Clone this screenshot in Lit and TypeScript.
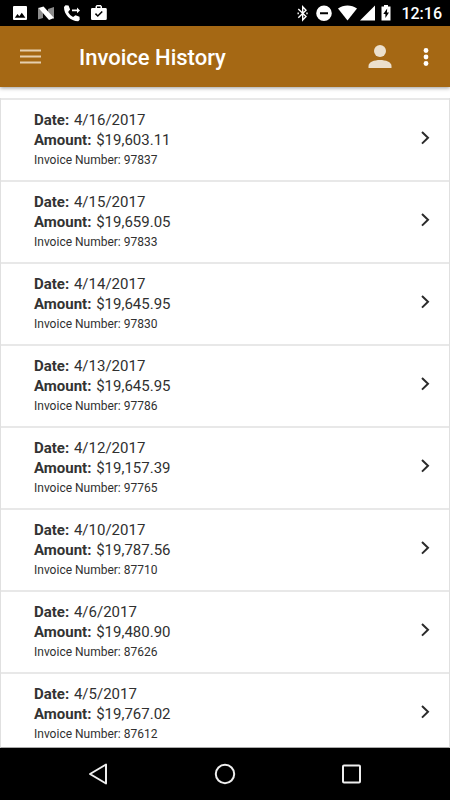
import { LitElement, html, css, svg } from "lit";
import { customElement, property } from "lit/decorators.js";

interface Invoice {
  date: string;
  amount: string;
  number: string;
}

const invoices: Invoice[] = [
  { date: "4/16/2017", amount: "$19,603.11", number: "97837" },
  { date: "4/15/2017", amount: "$19,659.05", number: "97833" },
  { date: "4/14/2017", amount: "$19,645.95", number: "97830" },
  { date: "4/13/2017", amount: "$19,645.95", number: "97786" },
  { date: "4/12/2017", amount: "$19,157.39", number: "97765" },
  { date: "4/10/2017", amount: "$19,787.56", number: "87710" },
  { date: "4/6/2017", amount: "$19,480.90", number: "87626" },
  { date: "4/5/2017", amount: "$19,767.02", number: "87612" },
];

const icon = (w: number, h: number, body: unknown) =>
  html`<svg width=${w} height=${h} viewBox="0 0 ${w} ${h}" aria-hidden="true">${body}</svg>`;

@customElement("status-bar")
class StatusBar extends LitElement {
  static styles = css`
    :host {
      display: flex;
      justify-content: space-between;
      align-items: center;
      height: 26px;
      flex: none;
      background: #000;
      color: #fff;
      font: 500 16px/24px Roboto, sans-serif;
    }
    svg { display: block; fill: #fff; }
    .left, .right { display: flex; align-items: center; }
    .left { gap: 6px; padding-left: 10px; }
    .right { padding-right: 8px; }
    .time { padding: 2px 0 0 8px; }
  `;

  render() {
    return html`
      <div class="left">
        ${icon(20, 26, svg`<path fill-rule="evenodd" d="M4 6h12a1 1 0 0 1 1 1v12a1 1 0 0 1-1 1H4a1 1 0 0 1-1-1V7a1 1 0 0 1 1-1zM7.500 14L4.800 17.700h10.600l-3.600-4.900-2.500 3.400z"/>`)}
        ${icon(20, 26, svg`<path fill="#8c8c8c" d="M2 7.500l5 4v6.500l-5 1.500zM18 7v12l-6-5V9z"/><path d="M2.500 8L7.500 6.500l10.500 11.500-5 2z"/>`)}
        ${icon(20, 26, svg`<path d="M3.500 5.200L6.500 5.500l1.600 4-2 2.500c1.200 2.300 2.800 3.900 5 5.100l2.400-1.800 4 1.500.200 3-1.500 1.500C8.500 21.300 1.800 14.500 2 7z"/><path d="M10 9.600h5V7.500l3 2.900-3 2.900V11.200h-5z"/>`)}
        ${icon(20, 26, svg`<path fill-rule="evenodd" d="M7.500 8V6.500L8.700 5h4.100L14 6.500V8h3.500a1.300 1.300 0 0 1 1.300 1.300v9.400a1.300 1.300 0 0 1-1.300 1.300H4.300A1.300 1.300 0 0 1 3 18.700V9.300A1.300 1.300 0 0 1 4.300 8zM9 8h3.500V6.500H9zM6.900 14.200l2.900 2.900 5-5-1.100-1.100-3.900 3.900-1.800-1.800z"/>`)}
      </div>
      <div class="right">
        ${icon(20, 26, svg`<path fill="none" stroke="#fff" stroke-width="1.400" d="M5.300 9l7.700 7.600-3.300 3.400V6.800L13 10.200l-7.700 7.600M5.200 12.500v1.800M14 12.500v1.800"/>`)}
        ${icon(22, 26, svg`<path fill-rule="evenodd" d="M11 5.500a7.800 7.800 0 1 1 0 15.600 7.800 7.800 0 0 1 0-15.600zM7 12.200v2h8v-2z"/>`)}
        ${icon(23, 26, svg`<path d="M12.500 20.500L3 8.500c5.500-4 13.500-4 19 0z"/>`)}
        ${icon(19, 26, svg`<path d="M2 20.500L17 5.500v15z"/>`)}
        ${icon(16, 26, svg`<path fill-rule="evenodd" d="M7 6.500V5h4v1.500h2.500V20.500H4.500v-14zM10.200 8.500L6.300 14h2.100V18L12 12.500H9.900z"/>`)}
        <span class="time">12:16</span>
      </div>
    `;
  }
}

@customElement("app-header")
class AppHeader extends LitElement {
  @property() heading = "";

  static styles = css`
    :host {
      display: flex;
      align-items: center;
      height: 61px;
      flex: none;
      background: #a56814;
      box-shadow: 0 1px 4px rgba(0, 0, 0, 0.4);
      color: #fff;
    }
    h1 { flex: 1; margin: 0; padding-top: 2px; font: 500 22px/28px Roboto, sans-serif; }
    button { display: flex; border: 0; padding: 0; background: none; }
    .menu { margin: 0 27px 0 10px; }
    .account { margin-right: 6px; }
    .more { margin-right: 4px; }
  `;

  render() {
    return html`
      <button class="menu" aria-label="Menu">
        ${icon(42, 40, svg`<path stroke="#e6cfaf" stroke-width="2" d="M10 13.500h21M10 19.500h21M10 25.500h21"/>`)}
      </button>
      <h1>${this.heading}</h1>
      <button class="account" aria-label="Account">
        ${icon(40, 40, svg`<g fill="#ece0cd"><circle cx="20" cy="14" r="6"/><path d="M8.500 31v-2c0-8 23-8 23 0v2z"/></g>`)}
      </button>
      <button class="more" aria-label="More options">
        ${icon(40, 40, svg`<g fill="#fff"><circle cx="20" cy="13.500" r="2.400"/><circle cx="20" cy="20" r="2.400"/><circle cx="20" cy="26.500" r="2.400"/></g>`)}
      </button>
    `;
  }
}

@customElement("invoice-row")
class InvoiceRow extends LitElement {
  @property({ attribute: false }) invoice!: Invoice;

  static styles = css`
    :host { display: block; }
    a {
      display: flex;
      align-items: center;
      justify-content: space-between;
      border-top: 2px solid #e8e8e8;
      padding: 10px 18px 10px 33px;
      color: #303030;
      text-decoration: none;
      font: 400 15px/20px Roboto, sans-serif;
    }
    p { margin: 0; }
    b { margin-right: 1px; font-weight: 700; color: #333; }
    .number { font-size: 12px; }
  `;

  render() {
    const { date, amount, number } = this.invoice;
    return html`
      <a href="#${number}">
        <div>
          <p><b>Date:</b> ${date}</p>
          <p><b>Amount:</b> ${amount}</p>
          <p class="number">Invoice Number: ${number}</p>
        </div>
        ${icon(12, 20, svg`<path fill="none" stroke="#2b2b2b" stroke-width="2" d="M3 2l6 5.800L3 13.600"/>`)}
      </a>
    `;
  }
}

@customElement("nav-bar")
class NavBar extends LitElement {
  static styles = css`
    :host {
      display: flex;
      justify-content: center;
      align-items: center;
      gap: 87px;
      height: 52px;
      flex: none;
      background: #000;
    }
    button { display: flex; border: 0; padding: 0; background: none; }
    svg { fill: none; stroke: #eee; stroke-width: 2; }
  `;

  render() {
    return html`
      <button aria-label="Back">${icon(40, 40, svg`<path stroke-linejoin="round" d="M28 10.500v19L12 20z"/>`)}</button>
      <button aria-label="Home">${icon(40, 40, svg`<circle cx="20" cy="20" r="9.200"/>`)}</button>
      <button aria-label="Recent apps">${icon(40, 40, svg`<rect x="11" y="11.500" width="17" height="17" rx="1"/>`)}</button>
    `;
  }
}

@customElement("app-root")
class AppRoot extends LitElement {
  static styles = css`
    :host {
      display: flex;
      flex-direction: column;
      height: 100vh;
      background: #fff;
    }
    main {
      flex: 1;
      min-height: 0;
      margin-top: 11px;
      overflow: hidden;
      border: 1px solid #e0e0e0;
      border-width: 0 1px 1px;
      border-bottom-color: #aaa;
    }
  `;

  render() {
    return html`
      <status-bar></status-bar>
      <app-header heading="Invoice History"></app-header>
      <main>${invoices.map((i) => html`<invoice-row .invoice=${i}></invoice-row>`)}</main>
      <nav-bar></nav-bar>
    `;
  }
}
